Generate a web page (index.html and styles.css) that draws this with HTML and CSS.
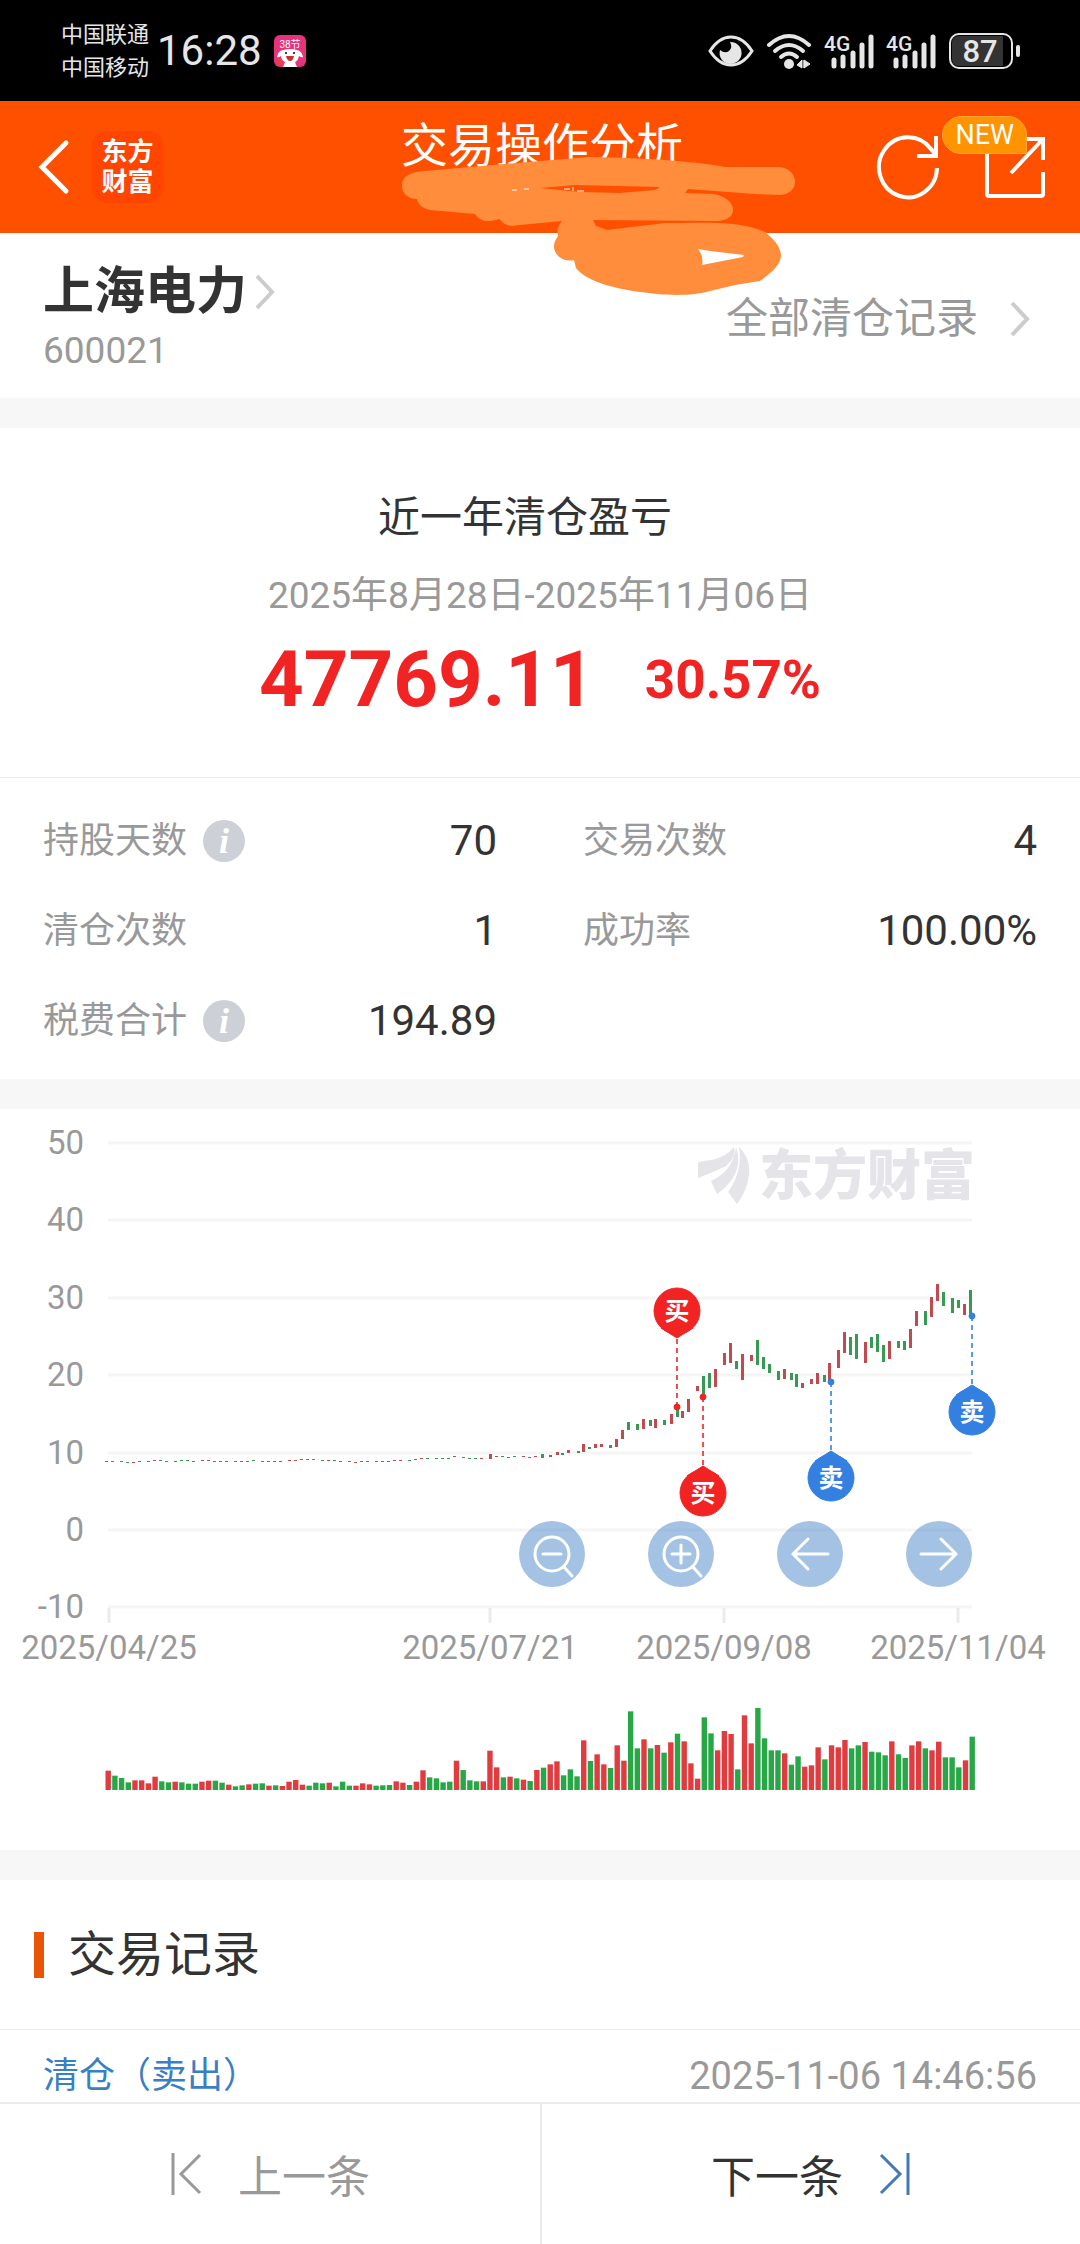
FILE: index.html
```
<!DOCTYPE html>
<html lang="zh-CN">
  <head>
    <meta charset="utf-8" />
    <meta name="viewport" content="width=device-width, initial-scale=1" />
    <title>交易操作分析</title>
    <link rel="stylesheet" href="styles.css">
  </head>

  <body>
    <!-- phone status bar -->
    <div class="status-bar">
      <div class="carriers">
        <span>中国联通</span>
        <span>中国移动</span>
      </div>
      <span class="clock">16:28</span>
      <svg class="app-icon" width="32" height="32" viewBox="0 0 32 32">
        <rect width="32" height="32" rx="6" fill="#e8327c"/>
        <text x="16" y="13" class="app-icon-text">38节</text>
        <path d="M3 22q1-6 6-7 7-2 14 0 5 1 6 7-1 1-4-1-1 5-4 6l2 5H9l2-5q-4-2-4-6-3 2-4 1z" fill="#fff"/>
        <path d="M12 21h8q-1 5-4 5t-4-5z" fill="#c8322e"/>
        <circle cx="12" cy="18" r="1"/><circle cx="20" cy="18" r="1"/>
        <path d="M3 24l4-1 2 6-4 2z" fill="#f0403c"/>
      </svg>
      <div class="status-icons">
        <svg width="46" height="34" viewBox="0 0 46 34">
          <path d="M2 17Q11 3 23 3t21 14Q35 31 23 31T2 17z" fill="none" stroke="#e6e6e6" stroke-width="3"/>
          <path d="M22 8a11 11 0 1 1-10 8q5 4 9 1 4-4 1-9z" fill="#e6e6e6"/>
        </svg>
        <svg width="46" height="36" viewBox="0 0 46 36">
          <g fill="none" stroke="#e6e6e6" stroke-width="4" stroke-linecap="round">
            <path d="M3 12Q23-6 43 12"/>
            <path d="M9 18q14-12 28 0"/>
            <path d="M15 24q8-7 16 0"/>
          </g>
          <circle cx="23" cy="31" r="5" fill="#e6e6e6"/>
          <path d="M31 32l5-5v8zM38 27v8M38 35v-8l6 4z" fill="#e6e6e6" stroke="#e6e6e6"/>
        </svg>
        <svg class="signal" width="50" height="36" viewBox="0 0 50 36">
          <text x="0" y="18">4G</text>
          <path d="M10 27v6M19 24v9M29 20v13M38 12v21M47 4v29"/>
        </svg>
        <svg class="signal" width="50" height="36" viewBox="0 0 50 36">
          <text x="0" y="18">4G</text>
          <path d="M10 27v6M19 24v9M29 20v13M38 12v21M47 4v29"/>
        </svg>
        <svg width="73" height="38" viewBox="0 0 73 38">
          <rect x="2" y="2" width="62" height="34" rx="9" fill="#000" stroke="#e6e6e6" stroke-width="2"/>
          <path d="M11 4h44v30H11q-7 0-7-7V11q0-7 7-7z" fill="#333"/>
          <rect x="68" y="13" width="4" height="12" rx="2" fill="#e6e6e6"/>
          <text x="32" y="30" class="battery-text">87</text>
        </svg>
      </div>
    </div>

    <header class="header">
      <button class="icon-button" aria-label="返回">
        <svg width="32" height="56" viewBox="0 0 32 56">
          <path d="M28 4L4 28l24 24" fill="none" stroke="#fff" stroke-width="5" stroke-linecap="round"/>
        </svg>
      </button>
      <div class="logo">东方<br>财富</div>
      <h1 class="title">交易操作分析</h1>
      <div class="header-actions">
        <button class="icon-button" aria-label="刷新">
          <svg width="64" height="66" viewBox="0 0 64 66">
            <g fill="none" stroke="#fff" stroke-width="4">
              <path d="M61 34A29 30 0 1 1 55 15l5 6"/>
              <path d="M60 2v20H41"/>
            </g>
          </svg>
        </button>
        <button class="icon-button share" aria-label="分享">
          <svg width="62" height="64" viewBox="0 0 62 64">
            <g fill="none" stroke="#fff" stroke-width="4">
              <path d="M28 4H5q-2 0-2 2v53q0 2 2 2h52q2 0 2-2V37"/>
              <path d="M40 4h19v21M59 4L27 38"/>
            </g>
          </svg>
          <span class="badge">NEW</span>
        </button>
      </div>
      <!-- marker over the account line -->
      <svg class="marker" width="400" height="145" viewBox="400 155 400 145">
        <path fill="#ff8d3b" d="M402 186C402 176 410 172 425 171L540 161 590 157C650 158 700 162 725 167L780 167C800 170 800 194 780 195L755 194 688 189 685 193 712 194C738 197 740 220 718 221L593 220 596 226 607 230 665 223C700 223 740 220 765 232 778 242 781 250 781 256 780 264 775 270 760 281L735 285 710 291C690 297 660 295 640 292 610 288 585 280 576 268L574 260C560 263 554 252 554 247 554 241 557 238 558 236 556 228 560 224 562 221L520 225C505 228 503 222 499 219 485 224 478 219 475 214L430 210C422 208 418 204 417 199 408 199 402 193 402 186z"/>
        <path fill="#ff5000" d="M540 188L575 185 660 187 655 190 620 193 580 192z"/>
        <path d="M564 189h6M573 187v4M577 191h7M512 190h5M524 189h5" stroke="#fff" stroke-width="1"/>
        <path fill="#fff" d="M698 249L710 251 744 255 743 257 702 265Q704 256 698 249z"/>
      </svg>
    </header>

    <main>
      <section class="stock">
        <div>
          <a class="stock-name" href="#stock">上海电力
            <svg width="20" height="36" viewBox="0 0 20 36"><path d="M2 2l15 16L2 34"/></svg>
          </a>
          <div class="stock-code">600021</div>
        </div>
        <a class="all-records" href="#all">全部清仓记录
          <svg width="20" height="36" viewBox="0 0 20 36"><path d="M2 2l15 16L2 34"/></svg>
        </a>
      </section>

      <section class="summary">
        <h2>近一年清仓盈亏</h2>
        <div class="period">2025年8月28日-2025年11月06日</div>
        <div class="profit">
          <strong class="amount">47769.11</strong>
          <strong class="percent">30.57%</strong>
        </div>
      </section>

      <dl class="stats">
        <div class="stat">
          <dt>持股天数 <button class="info" aria-label="说明">i</button></dt>
          <dd>70</dd>
        </div>
        <div class="stat"><dt>交易次数</dt><dd>4</dd></div>
        <div class="stat"><dt>清仓次数</dt><dd>1</dd></div>
        <div class="stat"><dt>成功率</dt><dd>100.00%</dd></div>
        <div class="stat">
          <dt>税费合计 <button class="info" aria-label="说明">i</button></dt>
          <dd>194.89</dd>
        </div>
      </dl>

      <section class="chart">
        <svg id="chart-svg" viewBox="0 0 1080 741">
          <g id="grid"></g>
          <g class="watermark">
            <path d="M698 54Q700 52 712 51 726 48 734 38 737 48 726 57 716 62 698 69z"/>
            <path d="M736 38Q742 54 733 69 726 79 717 85L711 72Q733 62 736 38z"/>
            <path d="M739 38Q751 50 749 66 747 82 737 95L728 83Q743 62 739 38z"/>
            <text x="759" y="86">东方财富</text>
          </g>
          <g id="candles"></g>
          <g id="volume"></g>
          <g id="pins"></g>
        </svg>
        <div class="chart-buttons">
          <button aria-label="缩小">
            <svg width="66" height="66" viewBox="0 0 66 66"><circle cx="33" cy="33" r="17"/><path d="M24 33h18M45 46l8 9"/></svg>
          </button>
          <button aria-label="放大">
            <svg width="66" height="66" viewBox="0 0 66 66"><circle cx="33" cy="33" r="17"/><path d="M24 33h18M33 24v18M45 46l8 9"/></svg>
          </button>
          <button aria-label="左移">
            <svg width="66" height="66" viewBox="0 0 66 66"><path d="M51 33H16M31 18L16 33l15 15"/></svg>
          </button>
          <button aria-label="右移">
            <svg width="66" height="66" viewBox="0 0 66 66"><path d="M15 33h35M35 18l15 15-15 15"/></svg>
          </button>
        </div>
      </section>

      <section class="records">
        <h2>交易记录</h2>
        <div class="record">
          <a href="#record">清仓（卖出）</a>
          <time>2025-11-06 14:46:56</time>
        </div>
      </section>
    </main>

    <footer class="pager">
      <button class="prev">
        <svg width="32" height="44" viewBox="0 0 32 44"><path d="M3 1v42M30 3L11 22l19 19"/></svg>
        上一条
      </button>
      <button class="next">
        下一条
        <svg width="32" height="44" viewBox="0 0 32 44"><path d="M29 1v42M2 3l19 19L2 41"/></svg>
      </button>
    </footer>

    <script src="script.js"></script>
  </body>
</html>
```
FILE: styles.css
```
* {
  box-sizing: border-box;
}

body {
  display: flex;
  flex-direction: column;
  min-height: 100vh;
  margin: 0;
  font-family: Roboto, "Noto Sans CJK SC", sans-serif;
  background-color: #fff;
  color: #333;
}

main {
  flex: 1;
}

h1, h2, dl, dd {
  margin: 0;
  font-weight: 400;
}

a {
  color: inherit;
  text-decoration: none;
}

button {
  padding: 0;
  border: 0;
  background: none;
  color: inherit;
  font-family: inherit;
}

svg {
  display: block;
  flex: none;
}

/* status bar */
.status-bar {
  display: flex;
  align-items: center;
  height: 101px;
  padding: 0 59px 0 61px;
  background-color: #000;
  color: #e6e6e6;
}

.carriers {
  display: flex;
  flex-direction: column;
  font-size: 22px;
  line-height: 33px;
}

.clock {
  margin: 0 12px 0 8px;
  font-size: 42px;
}

.app-icon-text {
  font-size: 10px;
  text-anchor: middle;
  fill: #fff;
}

.status-icons {
  display: flex;
  align-items: center;
  gap: 12px;
  margin-left: auto;
}

.signal text {
  font-size: 21px;
  font-weight: 500;
  fill: #e6e6e6;
}

.signal path {
  stroke: #e6e6e6;
  stroke-width: 5;
  stroke-linecap: round;
}

.battery-text {
  font-size: 31px;
  font-weight: 500;
  text-anchor: middle;
  fill: #e6e6e6;
}

/* orange header */
.header {
  position: relative;
  display: grid;
  grid-template-columns: 32px 1fr auto 1fr 32px;
  align-items: center;
  height: 132px;
  padding: 0 34px 0 38px;
  background-color: #ff5000;
  color: #fff;
}

.logo {
  justify-self: start;
  width: 71px;
  margin-left: 22px;
  padding: 6px 0;
  border-radius: 14px;
  background-color: #ff4500;
  font-size: 26px;
  font-weight: 700;
  line-height: 30px;
  text-align: center;
}

.title {
  align-self: start;
  padding-top: 20px;
  font-size: 47px;
  line-height: 50px;
}

.header-actions {
  grid-column: 4 / 6;
  display: flex;
  justify-content: flex-end;
  gap: 44px;
}

.share {
  position: relative;
}

.badge {
  position: absolute;
  right: 19px;
  bottom: 46px;
  padding: 0 12px;
  border: 1px solid #ffa733;
  border-radius: 19px 19px 2px 19px;
  background-color: #ff9300;
  color: #fff;
  font-size: 27px;
  line-height: 36px;
}

.marker {
  position: absolute;
  top: 54px;
  left: calc(50% - 140px);
}

/* stock name row */
.stock {
  display: flex;
  justify-content: space-between;
  padding: 27px 50px 20px 43px;
}

.stock svg path {
  fill: none;
  stroke: #ccc;
  stroke-width: 4;
}

.stock-name {
  display: flex;
  align-items: center;
  gap: 8px;
  font-size: 51px;
  font-weight: 700;
  line-height: 64px;
}

.stock-code {
  font-size: 37px;
  line-height: 54px;
  color: #999;
}

.all-records {
  display: flex;
  align-items: center;
  gap: 32px;
  font-size: 42px;
  line-height: 54px;
  color: #999;
}

/* profit */
.summary {
  padding: 60px 0 52px;
  border-top: 30px solid #f7f7f7;
  border-bottom: 1px solid #ebebeb;
  text-align: center;
}

.summary h2 {
  padding-right: 30px;
  font-size: 42px;
  line-height: 60px;
}

.period {
  margin: 18px 0 9px;
  font-size: 37px;
  line-height: 60px;
  color: #999;
}

.profit {
  display: flex;
  align-items: center;
  justify-content: center;
  gap: 50px;
  line-height: 90px;
  color: #f22323;
}

.amount {
  font-size: 78px;
}

.percent {
  font-size: 53px;
}

/* stats */
.stats {
  display: grid;
  grid-template-columns: 1fr 1fr;
  column-gap: 86px;
  padding: 18px 43px 13px;
}

.stat {
  display: flex;
  align-items: center;
  justify-content: space-between;
  line-height: 90px;
}

.stat dt {
  display: flex;
  align-items: center;
  gap: 16px;
  font-size: 36px;
  color: #999;
}

.stat dd {
  font-size: 42px;
}

.info {
  width: 42px;
  height: 42px;
  border-radius: 50%;
  background-color: #cdd0d6;
  color: #fff;
  font: italic 700 36px/42px "Liberation Serif", serif;
}

/* chart */
.chart {
  position: relative;
  border-top: 30px solid #f7f7f7;
}

.chart > svg {
  width: 100%;
}

#grid line {
  stroke: #f5f5f5;
  stroke-width: 3;
}

#grid .tick {
  stroke: #ebebeb;
}

#grid text {
  font-size: 33px;
  fill: #999;
}

.y-label {
  text-anchor: end;
}

.x-label {
  text-anchor: middle;
}

.watermark {
  fill: #e4e4e9;
  font-size: 54px;
  font-weight: 900;
}

#candles .up {
  fill: #c04a4e;
}

#candles .down {
  fill: #369a54;
}

#volume .up {
  fill: #e03c40;
}

#volume .down {
  fill: #27a745;
}

.buy {
  fill: #f22323;
  stroke: #f22323;
}

.sell {
  fill: #3380e0;
  stroke: #3380e0;
}

#pins line {
  stroke-width: 2;
  stroke-dasharray: 5 4;
  opacity: .8;
}

#pins text {
  fill: #fff;
  stroke: none;
  font-size: 25px;
  font-weight: 700;
  text-anchor: middle;
}

.chart-buttons {
  position: absolute;
  top: 412px;
  right: 10%;
  display: flex;
  gap: 63px;
}

.chart-buttons button {
  border-radius: 50%;
  background-color: rgba(74, 134, 201, .5);
}

.chart-buttons svg {
  fill: none;
  stroke: #fff;
  stroke-width: 3;
  stroke-linecap: round;
}

/* records */
.records {
  border-top: 30px solid #f7f7f7;
}

.records h2 {
  display: flex;
  align-items: center;
  gap: 24px;
  padding: 38px 34px;
  border-bottom: 1px solid #ebebeb;
  font-size: 48px;
  line-height: 73px;
}

.records h2::before {
  content: "";
  width: 10px;
  height: 46px;
  background-color: #e85506;
}

.record {
  display: flex;
  justify-content: space-between;
  padding: 21px 43px 0;
  font-size: 36px;
  line-height: 50px;
  color: #3a7fc4;
}

.record time {
  font-size: 38px;
  color: #999;
}

/* bottom pager */
.pager {
  display: grid;
  grid-template-columns: 1fr 1fr;
  height: 142px;
  border-top: 2px solid #ebebeb;
}

.pager button {
  display: flex;
  align-items: center;
  justify-content: center;
  gap: 36px;
  font-size: 44px;
}

.pager svg {
  fill: none;
  stroke: currentColor;
  stroke-width: 3;
}

.prev {
  color: #999;
}

.next {
  border-left: 2px solid #ebebeb;
}

.next svg {
  color: #4379b5;
}
```
FILE: script.js
```
var NS = "http://www.w3.org/2000/svg";

function add(parent, tag, attrs, text) {
  var el = document.createElementNS(NS, tag);
  for (var key in attrs) {
    el.setAttribute(key, attrs[key]);
  }
  if (text) el.textContent = text;
  parent.appendChild(el);
  return el;
}

// grid and axis labels
var grid = document.querySelector("#grid");
["50", "40", "30", "20", "10", "0", "-10"].forEach(function (label, i) {
  var y = Math.round(34 + i * 77.4);
  add(grid, "line", { x1: 108, x2: 972, y1: y, y2: y });
  add(grid, "text", { x: 84, y: y + 11, "class": "y-label" }, label);
});
[["2025/04/25", 109], ["2025/07/21", 490], ["2025/09/08", 724], ["2025/11/04", 958]].forEach(function (d) {
  add(grid, "line", { x1: d[1], x2: d[1], y1: 499, y2: 514, "class": "tick" });
  add(grid, "text", { x: d[1], y: 550, "class": "x-label" }, d[0]);
});

// quiet months: x, y, direction (r up, g down)
var flat = "106 353 r,112 353 g,121 353 g,127 354 g,133 354 r,139 353 r,148 353 r,154 352 r,160 352 g,166 353 g,175 353 r,181 352 g,187 352 g,193 353 g,202 352 r,208 352 r,214 353 g,220 353 g,226 353 r,235 353 g,241 353 g,247 353 r,253 352 g,262 353 g,268 353 g,274 353 g,280 353 r,289 352 r,295 352 r,301 351 g,307 351 g,313 351 g,322 352 g,328 352 r,334 352 g,340 353 g,349 353 g,355 354 r,361 353 r,367 353 r,376 353 g,382 353 g,388 353 r,394 352 r,400 352 r,409 352 g,415 351 r,421 350 r,427 350 g,436 350 g,442 350 g,448 350 g,454 348 r,463 349 g,469 350 g,475 350 g,481 350 r,496 348 r,502 348 g,508 349 r,514 348 g,523 348 r,529 349 g,535 348 r";
// x, high, low, direction
var candles = "490 345 350 r,542 345 349 g,550 346 348 r,557 343 346 r,562 344 346 g,568 341 344 r,578 342 344 g,583 335 343 r,589 338 340 g,595 335 339 r,601 335 338 r,610 336 339 g,616 330 338 r,622 321 330 r,628 313 321 g,637 315 321 g,643 310 320 r,650 311 317 g,655 310 319 r,664 311 316 g,671 305 315 r,677 301 308 g,682 302 309 r,688 290 303 r,697 277 282 r,703 267 286 g,709 264 279 g,715 260 278 r,724 244 256 r,730 234 254 r,736 252 260 g,742 245 271 r,751 246 252 r,757 231 256 g,763 248 260 g,769 255 264 g,778 262 271 g,784 260 270 r,791 264 271 g,796 265 278 g,802 274 279 r,811 270 275 r,817 264 275 r,824 266 273 g,829 254 272 r,838 241 259 r,844 223 244 r,850 228 246 g,856 225 250 g,865 233 254 r,871 228 239 g,877 225 243 g,883 236 253 g,889 232 250 r,898 232 239 g,904 232 241 g,910 220 239 r,916 202 217 r,925 202 216 g,931 188 208 r,937 175 192 r,943 183 197 g,952 189 204 g,958 191 199 g,964 195 206 r,970 181 206 g";

var candleGroup = document.querySelector("#candles");
flat.split(",").forEach(function (row) {
  var d = row.split(" ");
  add(candleGroup, "rect", { x: d[0] - 1, y: d[1] - 1, width: 3, height: 1, "class": d[2] == "r" ? "up" : "down" });
});
candles.split(",").forEach(function (row) {
  var d = row.split(" ");
  add(candleGroup, "rect", { x: d[0] - 1, y: d[1], width: 3, height: d[2] - d[1], "class": d[3] == "r" ? "up" : "down" });
});

// trading volume
var volume = "r58 g43 g36 g23 r29 r29 r20 r40 g26 g23 r25 g23 g19 g19 r25 r28 g28 g22 r16 g11 g14 r17 g19 g20 r13 g14 r12 r25 r30 r16 g13 g22 g20 r22 g11 g25 g13 r13 r20 r17 g13 g14 g15 r26 r22 g15 r25 r59 g38 g35 g23 g25 r88 g60 g29 g26 r26 r118 r68 g38 r40 g35 r31 g27 r60 g67 r77 r86 g44 g62 g41 r149 g87 r107 r77 g66 r134 r88 g236 g125 r152 g125 r135 g112 r143 g169 r146 r80 r34 g218 g170 r119 r177 r168 g62 r224 r140 g246 g155 g119 g119 r110 g76 g101 r70 r74 r128 g92 r134 r128 r150 g125 g134 r144 g115 g113 g104 r146 g107 g96 r134 r146 g125 r119 r145 g98 g98 g68 r89 g160".split(" ");
var volumeGroup = document.querySelector("#volume");
var step = (972 - 108) / (volume.length - 1);
volume.forEach(function (v, i) {
  var h = v.slice(1) / 3;
  add(volumeGroup, "rect", { x: 105.5 + i * step, y: 681 - h, width: 5.4, height: h, "class": v[0] == "r" ? "up" : "down" });
});

// buy and sell pins
var pins = [
  { type: "buy", text: "买", x: 677, y: 202, dot: 298 },
  { type: "buy", text: "买", x: 703, y: 384, dot: 288 },
  { type: "sell", text: "卖", x: 831, y: 369, dot: 273 },
  { type: "sell", text: "卖", x: 972, y: 303, dot: 207 }
];
pins.forEach(function (p) {
  var g = add(document.querySelector("#pins"), "g", { "class": p.type });
  var dir = p.dot > p.y ? 1 : -1;
  add(g, "line", { x1: p.x, x2: p.x, y1: p.y + dir * 28, y2: p.dot });
  add(g, "circle", { cx: p.x, cy: p.dot, r: 3 });
  add(g, "circle", { cx: p.x, cy: p.y, r: 23 });
  add(g, "path", { d: "M" + (p.x - 16) + " " + (p.y + dir * 17) + "L" + p.x + " " + (p.y + dir * 27) + "L" + (p.x + 16) + " " + (p.y + dir * 17) + "z" });
  add(g, "text", { x: p.x, y: p.y + 9 }, p.text);
});
```
